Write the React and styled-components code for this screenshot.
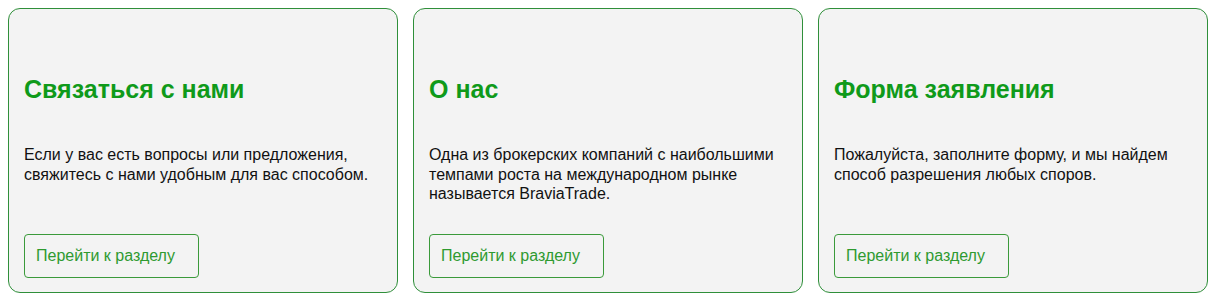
import styled, { createGlobalStyle } from "styled-components";

const GlobalStyle = createGlobalStyle`
  body {
    margin: 0;
    background: #ffffff;
    font-family: "Liberation Sans", Arial, sans-serif;
  }
`;

const sections = [
  {
    title: "Связаться с нами",
    text: "Если у вас есть вопросы или предложения, свяжитесь с нами удобным для вас способом.",
  },
  {
    title: "О нас",
    text: "Одна из брокерских компаний с наибольшими темпами роста на международном рынке называется BraviaTrade.",
  },
  {
    title: "Форма заявления",
    text: "Пожалуйста, заполните форму, и мы найдем способ разрешения любых споров.",
  },
];

export default function App() {
  return (
    <>
      <GlobalStyle />
      <CardsRow>
        {sections.map((s) => (
          <Card key={s.title}>
            <Title>{s.title}</Title>
            <Text>{s.text}</Text>
            <LinkButton>Перейти к разделу</LinkButton>
          </Card>
        ))}
      </CardsRow>
    </>
  );
}

const CardsRow = styled.div`
  display: grid;
  grid-template-columns: repeat(3, 390px);
  gap: 15px;
  padding: 8px;
`;

const Card = styled.div`
  display: flex;
  flex-direction: column;
  align-items: flex-start;
  box-sizing: border-box;
  height: 285px;
  padding: 66px 15px 14px;
  background-color: #f3f3f3;
  border: 1px solid #2f8f3a;
  border-radius: 12px;
`;

const Title = styled.h2`
  margin: 0 0 41px;
  font-size: 25px;
  line-height: 29px;
  font-weight: 700;
  color: #0f9a1a;
`;

const Text = styled.p`
  margin: 0;
  font-size: 16px;
  line-height: 19.5px;
  color: #111111;
`;

const LinkButton = styled.button`
  margin-top: auto;
  box-sizing: border-box;
  min-width: 175px;
  height: 44px;
  padding: 0 11px;
  text-align: left;
  font-family: "Liberation Sans", Arial, sans-serif;
  font-size: 16px;
  color: #2e9a30;
  background: transparent;
  border: 1px solid #3a9a3a;
  border-radius: 4px;
  cursor: pointer;
`;
